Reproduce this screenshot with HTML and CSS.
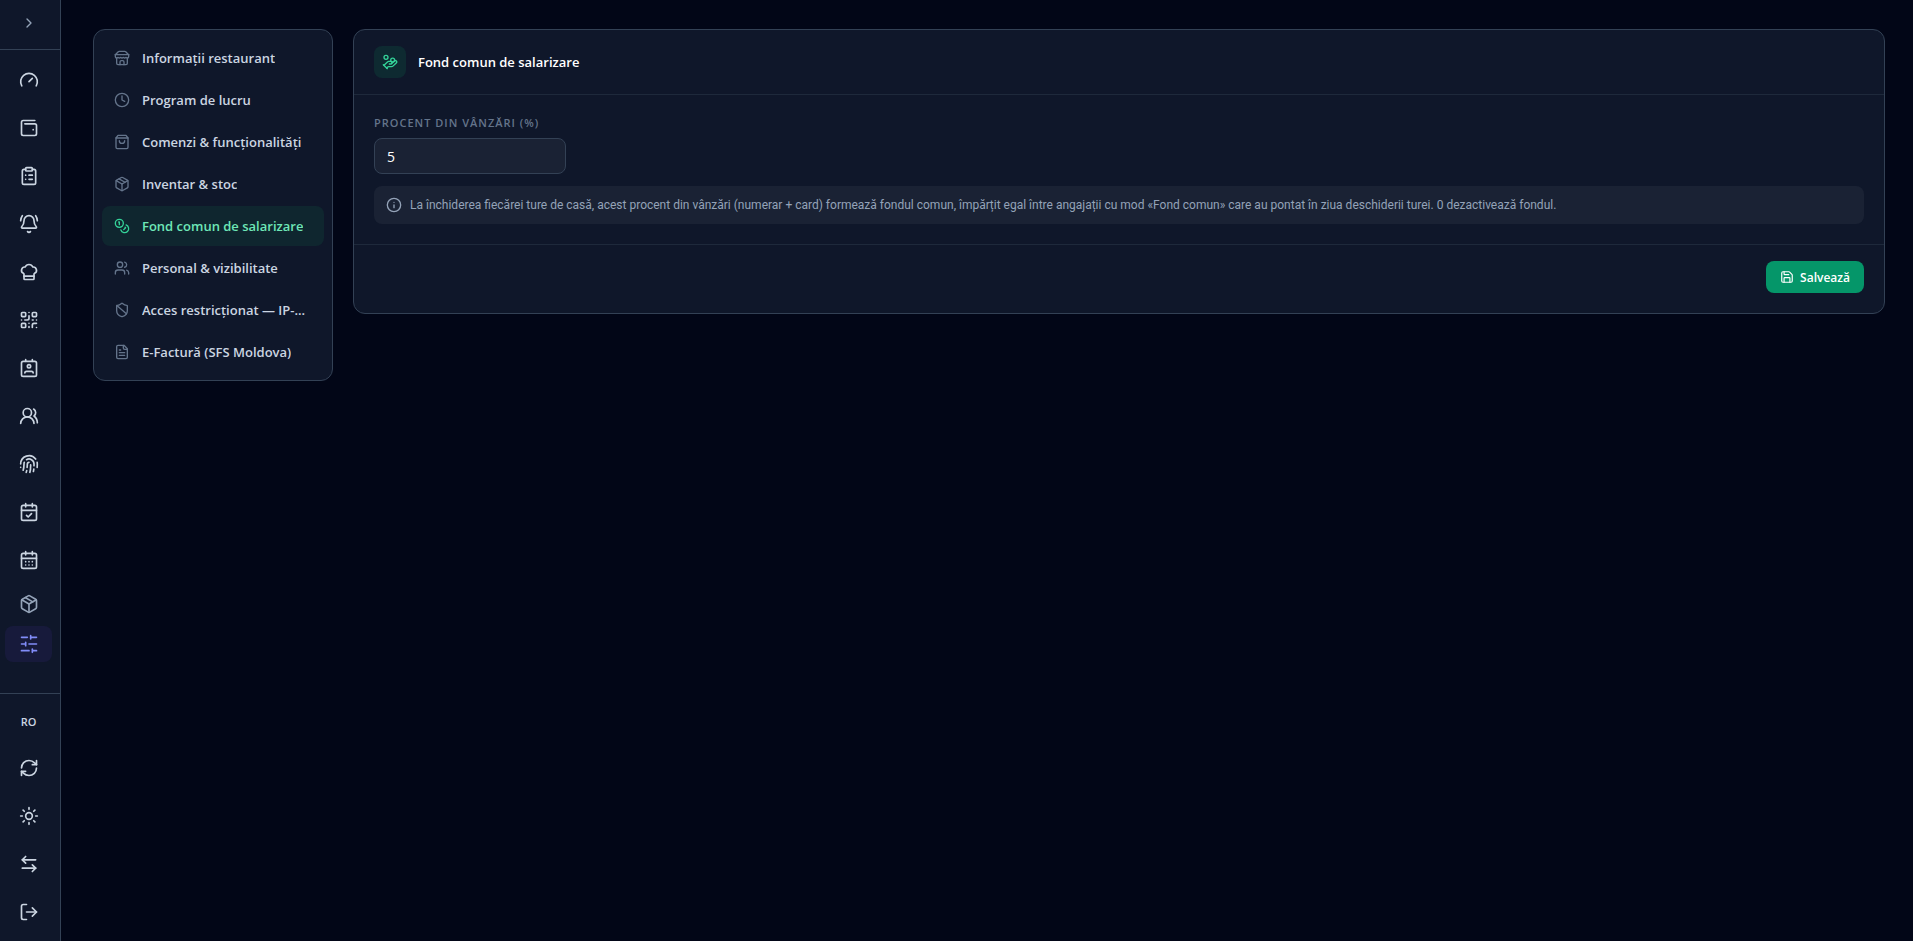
FILE: index.html
```html
<!DOCTYPE html>
<html lang="ro">
<head>
  <meta charset="UTF-8">
  <meta name="viewport" content="width=device-width, initial-scale=1.0">
  <title>Fond comun de salarizare</title>
  <link rel="stylesheet" href="styles.css">
</head>
<body>
  <aside class="sidebar">
    <div class="sidebar-header">
      <button class="toggle" aria-label="Extinde meniul">
        <svg class="icon" viewBox="0 0 24 24"><path d="m9 18 6-6-6-6"/></svg>
      </button>
    </div>

    <nav class="sidebar-nav" aria-label="Meniu principal">
      <a href="#" class="side-link" aria-label="Panou">
        <svg class="icon" viewBox="0 0 24 24"><path d="m12 14 4-4"/><path d="M3.34 19a10 10 0 1 1 17.32 0"/></svg>
      </a>
      <a href="#" class="side-link" aria-label="Casa">
        <svg class="icon" viewBox="0 0 24 24"><path d="M17 14h.01"/><path d="M7 7h12a2 2 0 0 1 2 2v10a2 2 0 0 1-2 2H5a2 2 0 0 1-2-2V5a2 2 0 0 1 2-2h14"/></svg>
      </a>
      <a href="#" class="side-link" aria-label="Comenzi">
        <svg class="icon" viewBox="0 0 24 24"><rect width="8" height="4" x="8" y="2" rx="1"/><path d="M16 4h2a2 2 0 0 1 2 2v14a2 2 0 0 1-2 2H6a2 2 0 0 1-2-2V6a2 2 0 0 1 2-2h2"/><path d="M12 11h4M12 16h4M8 11h.01M8 16h.01"/></svg>
      </a>
      <a href="#" class="side-link" aria-label="Apeluri">
        <svg class="icon" viewBox="0 0 24 24"><path d="M10.268 21a2 2 0 0 0 3.464 0"/><path d="M22 8c0-2.300-.8-4.300-2-6"/><path d="M3.262 15.326A1 1 0 0 0 4 17h16a1 1 0 0 0 .740-1.673C19.410 13.956 18 12.499 18 8A6 6 0 0 0 6 8c0 4.499-1.411 5.956-2.738 7.326"/><path d="M4 2C2.800 3.700 2 5.700 2 8"/></svg>
      </a>
      <a href="#" class="side-link" aria-label="Bucătărie">
        <svg class="icon" viewBox="0 0 24 24"><path d="M17 21a1 1 0 0 0 1-1v-5.350c0-.457.316-.844.727-1.041a4 4 0 0 0-2.134-7.589 5 5 0 0 0-9.186 0 4 4 0 0 0-2.134 7.588c.411.198.727.585.727 1.041V20a1 1 0 0 0 1 1Z"/><path d="M6 17h12"/></svg>
      </a>
      <a href="#" class="side-link" aria-label="Coduri QR">
        <svg class="icon" viewBox="0 0 24 24"><rect width="5" height="5" x="3" y="3" rx="1"/><rect width="5" height="5" x="16" y="3" rx="1"/><rect width="5" height="5" x="3" y="16" rx="1"/><path d="M21 16h-3a2 2 0 0 0-2 2v3"/><path d="M21 21v.01M12 7v3a2 2 0 0 1-2 2H7M3 12h.01M12 3h.01M12 16v.01M16 12h1M21 12v.01M12 21v-1"/></svg>
      </a>
      <a href="#" class="side-link" aria-label="Clienți">
        <svg class="icon" viewBox="0 0 24 24"><path d="M17 18a2 2 0 0 0-2-2H9a2 2 0 0 0-2 2"/><rect width="18" height="18" x="3" y="4" rx="2"/><circle cx="12" cy="10" r="2"/><path d="M8 2v2M16 2v2"/></svg>
      </a>
      <a href="#" class="side-link" aria-label="Angajați">
        <svg class="icon" viewBox="0 0 24 24"><path d="M18 21a8 8 0 0 0-16 0"/><circle cx="10" cy="8" r="5"/><path d="M22 20c0-3.370-2-6.500-4-8a5 5 0 0 0-.45-8.300"/></svg>
      </a>
      <a href="#" class="side-link" aria-label="Pontaj">
        <svg class="icon" viewBox="0 0 24 24"><path d="M12 10a2 2 0 0 0-2 2c0 1.020-.1 2.510-.26 4"/><path d="M14 13.120c0 2.380 0 6.380-1 8.880"/><path d="M17.290 21.020c.12-.6.430-2.300.5-3.020"/><path d="M2 12a10 10 0 0 1 18-6"/><path d="M2 16h.01"/><path d="M21.800 16c.2-2 .131-5.354 0-6"/><path d="M5 19.500C5.500 18 6 15 6 12a6 6 0 0 1 .34-2"/><path d="M8.650 22c.21-.66.450-1.320.570-2"/><path d="M9 6.800a6 6 0 0 1 9 5.200v2"/></svg>
      </a>
      <a href="#" class="side-link" aria-label="Rezervări">
        <svg class="icon" viewBox="0 0 24 24"><path d="M8 2v4M16 2v4"/><rect width="18" height="18" x="3" y="4" rx="2"/><path d="M3 10h18"/><path d="m9 16 2 2 4-4"/></svg>
      </a>
      <a href="#" class="side-link" aria-label="Calendar">
        <svg class="icon" viewBox="0 0 24 24"><path d="M8 2v4M16 2v4"/><rect width="18" height="18" x="3" y="4" rx="2"/><path d="M3 10h18M8 14h.01M12 14h.01M16 14h.01M8 18h.01M12 18h.01M16 18h.01"/></svg>
      </a>
      <a href="#" class="side-link small" aria-label="Inventar">
        <svg class="icon" viewBox="0 0 24 24"><path d="M11 21.730a2 2 0 0 0 2 0l7-4A2 2 0 0 0 21 16V8a2 2 0 0 0-1-1.730l-7-4a2 2 0 0 0-2 0l-7 4A2 2 0 0 0 3 8v8a2 2 0 0 0 1 1.730z"/><path d="M12 22V12"/><path d="M3.290 7 12 12l8.710-5"/><path d="m7.500 4.270 9 5.150"/></svg>
      </a>
      <a href="#" class="side-link small active" aria-label="Setări" aria-current="page">
        <svg class="icon" viewBox="0 0 24 24"><path d="M21 4h-7M10 4H3M21 12h-9M8 12H3M21 20h-5M12 20H3M14 2v4M8 10v4M16 18v4"/></svg>
      </a>
    </nav>

    <div class="sidebar-footer">
      <button class="side-link lang">RO</button>
      <button class="side-link" aria-label="Reîncarcă">
        <svg class="icon" viewBox="0 0 24 24"><path d="M3 12a9 9 0 0 1 9-9 9.750 9.750 0 0 1 6.740 2.740L21 8"/><path d="M21 3v5h-5"/><path d="M21 12a9 9 0 0 1-9 9 9.750 9.750 0 0 1-6.740-2.740L3 16"/><path d="M8 16H3v5"/></svg>
      </button>
      <button class="side-link" aria-label="Temă">
        <svg class="icon" viewBox="0 0 24 24"><circle cx="12" cy="12" r="4"/><path d="M12 2v2M12 20v2M4.930 4.930l1.410 1.410M17.660 17.660l1.410 1.410M2 12h2M20 12h2M6.340 17.660l-1.410 1.410M19.070 4.930l-1.410 1.410"/></svg>
      </button>
      <button class="side-link" aria-label="Schimbă restaurantul">
        <svg class="icon" viewBox="0 0 24 24"><path d="M8 3 4 7l4 4"/><path d="M4 7h16"/><path d="m16 21 4-4-4-4"/><path d="M20 17H4"/></svg>
      </button>
      <button class="side-link" aria-label="Ieșire">
        <svg class="icon" viewBox="0 0 24 24"><path d="M9 21H5a2 2 0 0 1-2-2V5a2 2 0 0 1 2-2h4"/><path d="m16 17 5-5-5-5"/><path d="M21 12H9"/></svg>
      </button>
    </div>
  </aside>

  <main class="content">
    <nav class="settings-nav" aria-label="Setări">
      <a href="#" class="settings-link">
        <svg class="icon" viewBox="0 0 24 24"><path d="m2 7 4.410-4.410A2 2 0 0 1 7.830 2h8.340a2 2 0 0 1 1.420.590L22 7"/><path d="M4 12v8a2 2 0 0 0 2 2h12a2 2 0 0 0 2-2v-8"/><path d="M15 22v-4a2 2 0 0 0-2-2h-2a2 2 0 0 0-2 2v4"/><path d="M2 7h20"/><path d="M22 7v3a2 2 0 0 1-2 2 2.700 2.700 0 0 1-1.590-.63.7.7 0 0 0-.82 0A2.700 2.700 0 0 1 16 12a2.700 2.700 0 0 1-1.590-.63.7.7 0 0 0-.82 0A2.700 2.700 0 0 1 12 12a2.700 2.700 0 0 1-1.590-.63.7.7 0 0 0-.82 0A2.700 2.700 0 0 1 8 12a2.700 2.700 0 0 1-1.590-.63.7.7 0 0 0-.82 0A2.700 2.700 0 0 1 4 12a2 2 0 0 1-2-2V7"/></svg>
        <span>Informații restaurant</span>
      </a>
      <a href="#" class="settings-link">
        <svg class="icon" viewBox="0 0 24 24"><circle cx="12" cy="12" r="10"/><path d="M12 6v6l4 2"/></svg>
        <span>Program de lucru</span>
      </a>
      <a href="#" class="settings-link">
        <svg class="icon" viewBox="0 0 24 24"><path d="M6 2 3 6v14a2 2 0 0 0 2 2h14a2 2 0 0 0 2-2V6l-3-4Z"/><path d="M3 6h18"/><path d="M16 10a4 4 0 0 1-8 0"/></svg>
        <span>Comenzi &amp; funcționalități</span>
      </a>
      <a href="#" class="settings-link">
        <svg class="icon" viewBox="0 0 24 24"><path d="M11 21.730a2 2 0 0 0 2 0l7-4A2 2 0 0 0 21 16V8a2 2 0 0 0-1-1.730l-7-4a2 2 0 0 0-2 0l-7 4A2 2 0 0 0 3 8v8a2 2 0 0 0 1 1.730z"/><path d="M12 22V12"/><path d="M3.290 7 12 12l8.710-5"/><path d="m7.500 4.270 9 5.150"/></svg>
        <span>Inventar &amp; stoc</span>
      </a>
      <a href="#" class="settings-link active" aria-current="page">
        <svg class="icon" viewBox="0 0 24 24"><circle cx="8" cy="8" r="6"/><path d="M18.090 10.370A6 6 0 1 1 10.340 18"/><path d="M7 6h1v4"/><path d="m16.710 13.880.7.710-2.820 2.820"/></svg>
        <span>Fond comun de salarizare</span>
      </a>
      <a href="#" class="settings-link">
        <svg class="icon" viewBox="0 0 24 24"><path d="M16 21v-2a4 4 0 0 0-4-4H6a4 4 0 0 0-4 4v2"/><circle cx="9" cy="7" r="4"/><path d="M22 21v-2a4 4 0 0 0-3-3.870"/><path d="M16 3.130a4 4 0 0 1 0 7.750"/></svg>
        <span>Personal &amp; vizibilitate</span>
      </a>
      <a href="#" class="settings-link">
        <svg class="icon" viewBox="0 0 24 24"><path d="M20 13c0 5-3.500 7.500-7.660 8.950a1 1 0 0 1-.67-.01C7.500 20.500 4 18 4 13V6a1 1 0 0 1 1-1c2 0 4.500-1.200 6.240-2.720a1.170 1.170 0 0 1 1.520 0C14.510 3.810 17 5 19 5a1 1 0 0 1 1 1z"/><path d="m4.243 5.210 14.390 12.472"/></svg>
        <span>Acces restricționat — IP-...</span>
      </a>
      <a href="#" class="settings-link">
        <svg class="icon" viewBox="0 0 24 24"><path d="M15 2H6a2 2 0 0 0-2 2v16a2 2 0 0 0 2 2h12a2 2 0 0 0 2-2V7Z"/><path d="M14 2v4a2 2 0 0 0 2 2h4"/><path d="M10 9H8M16 13H8M16 17H8"/></svg>
        <span>E-Factură (SFS Moldova)</span>
      </a>
    </nav>

    <form class="card">
      <div class="card-header">
        <div class="card-icon">
          <svg class="icon" viewBox="0 0 24 24"><path d="M11 15h2a2 2 0 1 0 0-4h-3c-.6 0-1.100.2-1.400.6L3 17"/><path d="m7 21 1.600-1.400c.3-.4.8-.6 1.400-.6h4c1.100 0 2.100-.4 2.800-1.200l4.600-4.400a2 2 0 0 0-2.750-2.910l-4.200 3.900"/><path d="m2 16 6 6"/><circle cx="16" cy="9" r="2.900"/><circle cx="6" cy="5" r="3"/></svg>
        </div>
        <h1>Fond comun de salarizare</h1>
      </div>

      <div class="card-body">
        <label for="percent">Procent din vânzări (%)</label>
        <input type="text" inputmode="decimal" id="percent" value="5">
        <div class="info">
          <svg class="icon" viewBox="0 0 24 24"><circle cx="12" cy="12" r="10"/><path d="M12 16v-4M12 8h.01"/></svg>
          <p>La închiderea fiecărei ture de casă, acest procent din vânzări (numerar + card) formează fondul comun, împărțit egal între angajații cu mod «Fond comun» care au pontat în ziua deschiderii turei. 0 dezactivează fondul.</p>
        </div>
      </div>

      <div class="card-footer">
        <button type="button" class="save-button">
          <svg class="icon" viewBox="0 0 24 24"><path d="M15.200 3a2 2 0 0 1 1.400.6l3.800 3.800a2 2 0 0 1 .6 1.400V19a2 2 0 0 1-2 2H5a2 2 0 0 1-2-2V5a2 2 0 0 1 2-2z"/><path d="M17 21v-7a1 1 0 0 0-1-1H8a1 1 0 0 0-1 1v7"/><path d="M7 3v4a1 1 0 0 0 1 1h7"/></svg>
          Salvează
        </button>
      </div>
    </form>
  </main>
</body>
</html>
```
FILE: styles.css
```css
* {
  box-sizing: border-box;
}

body {
  margin: 0;
  min-height: 100vh;
  display: flex;
  background-color: #020617;
  color: #cbd5e1;
  font-family: "Segoe UI", "Open Sans", "Noto Sans", sans-serif;
  font-size: 13px;
}

a {
  color: inherit;
  text-decoration: none;
}

button {
  border: none;
  background: none;
  color: inherit;
  font-family: inherit;
  cursor: pointer;
}

.icon {
  display: block;
  flex-shrink: 0;
  width: 16px;
  height: 16px;
  fill: none;
  stroke: currentColor;
  stroke-width: 2;
  stroke-linecap: round;
  stroke-linejoin: round;
}

/* Sidebar */
.sidebar {
  position: sticky;
  top: 0;
  display: flex;
  flex-direction: column;
  flex-shrink: 0;
  width: 61px;
  height: 100vh;
  background-color: #0f172a;
  border-right: 1px solid #334155;
}

.sidebar-header {
  display: flex;
  padding: 7px 8px 10px 5px;
  border-bottom: 1px solid #334155;
}

.toggle {
  display: flex;
  align-items: center;
  justify-content: center;
  width: 100%;
  height: 32px;
  padding: 0;
  color: #94a3b8;
}

.sidebar-nav {
  flex: 1;
  min-height: 0;
  display: flex;
  flex-direction: column;
  gap: 4px;
  padding: 8px 8px 8px 5px;
  overflow: hidden;
}

.side-link {
  display: flex;
  align-items: center;
  justify-content: center;
  flex-shrink: 0;
  height: 44px;
  padding: 0;
  border-radius: 8px;
  color: #cbd5e1;
}

.side-link .icon {
  width: 20px;
  height: 20px;
}

.side-link.small {
  height: 36px;
  color: #94a3b8;
}

.side-link.active {
  background-color: #171a3b;
  color: #818cf8;
}

.side-link.lang {
  height: 40px;
  padding-bottom: 2px;
  font-size: 11px;
  font-weight: 600;
}

.sidebar-footer {
  display: flex;
  flex-direction: column;
  gap: 4px;
  padding: 8px 8px 7px 5px;
  border-top: 1px solid #334155;
}

/* Page */
.content {
  flex: 1;
  min-width: 0;
  display: flex;
  align-items: flex-start;
  gap: 20px;
  padding: 29px 28px 29px 32px;
}

.settings-nav {
  display: flex;
  flex-direction: column;
  gap: 2px;
  flex-shrink: 0;
  width: 240px;
  padding: 8px;
  background-color: #0f172a;
  border: 1px solid #334155;
  border-radius: 12px;
}

.settings-link {
  display: flex;
  align-items: center;
  gap: 12px;
  height: 40px;
  padding: 0 12px;
  border-radius: 8px;
  font-weight: 600;
}

.settings-link span {
  overflow: hidden;
  white-space: nowrap;
  text-overflow: ellipsis;
}

.settings-link .icon {
  color: #64748b;
}

.settings-link.active {
  background-color: #0f262f;
  color: #6ee7b7;
}

.settings-link.active .icon {
  color: #34d399;
}

/* Card */
.card {
  flex: 1;
  min-width: 0;
  background-color: #0f172a;
  border: 1px solid #334155;
  border-radius: 12px;
}

.card-header {
  display: flex;
  align-items: center;
  gap: 12px;
  padding: 16px 20px;
  border-bottom: 1px solid #1e293b;
}

.card-icon {
  display: flex;
  align-items: center;
  justify-content: center;
  width: 32px;
  height: 32px;
  border-radius: 8px;
  background-color: #0e2a31;
  color: #34d399;
}

.card-header h1 {
  margin: 0;
  color: #ffffff;
  font-size: 13px;
  font-weight: 600;
}

.card-body {
  padding: 20px;
}

.card-body label {
  display: block;
  margin-bottom: 7px;
  color: #64748b;
  font-size: 11px;
  font-weight: 600;
  line-height: 16px;
  letter-spacing: 1px;
  text-transform: uppercase;
}

.card-body input {
  display: block;
  width: 192px;
  height: 36px;
  padding: 0 12px;
  background-color: #1a2234;
  border: 1px solid #334155;
  border-radius: 8px;
  color: #ffffff;
  font-family: inherit;
  font-size: 14px;
}

.info {
  display: flex;
  align-items: center;
  gap: 8px;
  margin-top: 12px;
  padding: 10px 12px;
  background-color: #1a2234;
  border-radius: 8px;
  color: #94a3b8;
}

.info p {
  margin: 0;
  font-family: "Segoe UI", Roboto, "Open Sans", sans-serif;
  font-size: 12px;
  line-height: 18px;
}

.card-footer {
  display: flex;
  justify-content: flex-end;
  padding: 16px 20px 20px;
  border-top: 1px solid #1e293b;
}

.save-button {
  display: flex;
  align-items: center;
  gap: 6px;
  height: 32px;
  padding: 0 14px;
  background-color: #059669;
  border-radius: 8px;
  color: #ffffff;
  font-size: 12px;
  font-weight: 600;
}

.save-button .icon {
  width: 14px;
  height: 14px;
}
```
